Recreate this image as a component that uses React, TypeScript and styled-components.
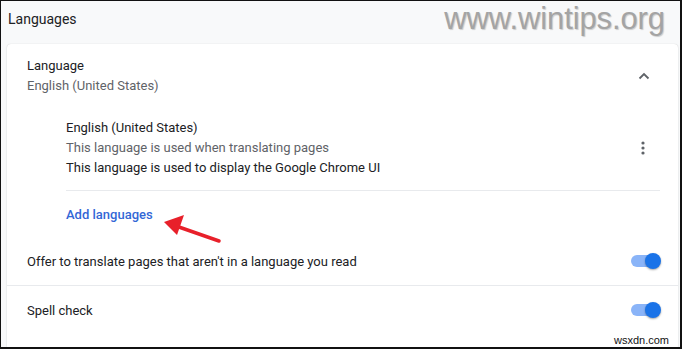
import React from "react";
import styled, { createGlobalStyle } from "styled-components";

const GlobalStyle = createGlobalStyle`
  html, body {
    margin: 0;
    padding: 0;
    background: #ffffff;
  }
  body {
    font-family: Roboto, "Liberation Sans", Arial, sans-serif;
  }
`;

const Frame = styled.div`
  position: relative;
  box-sizing: border-box;
  width: 682px;
  height: 349px;
  overflow: hidden;
  background: #f8f9fa;
  border-top: 1px solid #111;
  border-left: 1px solid #111;
  border-right: 2px solid #111;
  border-bottom: 2px solid #111;
  display: flex;
  flex-direction: column;
`;

const Heading = styled.h2`
  margin: 0;
  height: 43px;
  padding-left: 7px;
  display: flex;
  align-items: center;
  padding-bottom: 7px;
  box-sizing: border-box;
  font-size: 14px;
  font-weight: 400;
  color: #202124;
`;

const Card = styled.div`
  flex: 1;
  margin: 0 2px 0 6px;
  background: #ffffff;
  border-radius: 4px 4px 0 0;
  box-shadow: 0 0 1px rgba(60, 64, 67, 0.25), 0 1px 2px rgba(60, 64, 67, 0.12);
  display: flex;
  flex-direction: column;
`;

const Header = styled.div`
  display: flex;
  align-items: center;
  padding: 12px 20px 0 20px;
`;

const HeaderText = styled.div`
  flex: 1;
  display: flex;
  flex-direction: column;
`;

const Line = styled.div<{ $tone?: "primary" | "secondary" | "link" }>`
  font-size: 13px;
  line-height: 20px;
  color: ${({ $tone }) =>
    $tone === "secondary" ? "#5f6368" : $tone === "link" ? "#3367d6" : "#202124"};
  font-weight: ${({ $tone }) => ($tone === "link" ? 500 : 400)};
`;

const IconBox = styled.div<{ $inset: number }>`
  width: 24px;
  height: 24px;
  display: flex;
  align-items: center;
  justify-content: center;
  margin-right: ${({ $inset }) => $inset}px;
`;

const LangList = styled.div`
  padding: 22px 18px 0 59px;
`;

const LangItem = styled.div`
  display: flex;
  align-items: center;
  padding-bottom: 12px;
  border-bottom: 1px solid #e8eaed;
`;

const AddRow = styled.div`
  height: 46px;
  display: flex;
  align-items: center;
  padding-top: 1px;
  box-sizing: border-box;
`;

const ToggleRow = styled.div<{ $divider?: boolean }>`
  display: flex;
  align-items: center;
  height: 48px;
  padding: 0 21px 0 20px;
  border-top: ${({ $divider }) => ($divider ? "1px solid #e8eaed" : "none")};
`;

const RowLabel = styled.div`
  flex: 1;
  font-size: 13px;
  color: #202124;
`;

const Track = styled.div`
  position: relative;
  width: 26px;
  height: 12px;
  border-radius: 6px;
  background: #8ab4f8;
`;

const Knob = styled.div`
  position: absolute;
  top: -2px;
  right: -4px;
  width: 16px;
  height: 16px;
  border-radius: 50%;
  background: #1a73e8;
  box-shadow: 0 1px 2px rgba(0, 0, 0, 0.35);
`;

const Watermark = styled.div`
  position: absolute;
  top: 0px;
  right: 15px;
  font-family: "Liberation Sans", Arial, sans-serif;
  font-size: 31px;
  color: #a4a4a4;
  text-shadow: 1px 1px 1px rgba(0, 0, 0, 0.18);
  letter-spacing: -0.1px;
`;

const Footer = styled.div`
  position: absolute;
  right: 9px;
  bottom: 1px;
  font-family: "Liberation Sans", Arial, sans-serif;
  font-size: 11px;
  color: #111;
  background: #fff;
  padding: 0 2px;
`;

const Arrow = styled.svg`
  position: absolute;
  left: 155px;
  top: 210px;
`;

const Toggle = () => (
  <Track>
    <Knob />
  </Track>
);

export default function App() {
  return (
    <>
      <GlobalStyle />
      <Frame>
        <Heading>Languages</Heading>
        <Card>
          <Header>
            <HeaderText>
              <Line>Language</Line>
              <Line $tone="secondary">English (United States)</Line>
            </HeaderText>
            <IconBox $inset={2}>
              <svg width="12" height="8" viewBox="0 0 12 8">
                <path d="M1.5 6.5 L6 2 L10.5 6.5" fill="none" stroke="#5f6368" strokeWidth="1.8" />
              </svg>
            </IconBox>
          </Header>
          <LangList>
            <LangItem>
              <HeaderText>
                <Line>English (United States)</Line>
                <Line $tone="secondary">This language is used when translating pages</Line>
                <Line>This language is used to display the Google Chrome UI</Line>
              </HeaderText>
              <IconBox $inset={5}>
                <svg width="4" height="14" viewBox="0 0 4 14">
                  <circle cx="2" cy="2" r="1.6" fill="#5f6368" />
                  <circle cx="2" cy="7" r="1.6" fill="#5f6368" />
                  <circle cx="2" cy="12" r="1.6" fill="#5f6368" />
                </svg>
              </IconBox>
            </LangItem>
            <AddRow>
              <Line $tone="link">Add languages</Line>
            </AddRow>
          </LangList>
          <ToggleRow>
            <RowLabel>Offer to translate pages that aren't in a language you read</RowLabel>
            <Toggle />
          </ToggleRow>
          <ToggleRow $divider>
            <RowLabel>Spell check</RowLabel>
            <Toggle />
          </ToggleRow>
        </Card>
        <Watermark>www.wintips.org</Watermark>
        <Footer>wsxdn.com</Footer>
        <Arrow width="70" height="35" viewBox="0 0 70 35">
          <line x1="63" y1="30" x2="20" y2="15" stroke="#e8202a" strokeWidth="3.5" strokeLinecap="round" />
          <polygon points="8,11 28,4 21,24" fill="#e8202a" />
        </Arrow>
      </Frame>
    </>
  );
}
